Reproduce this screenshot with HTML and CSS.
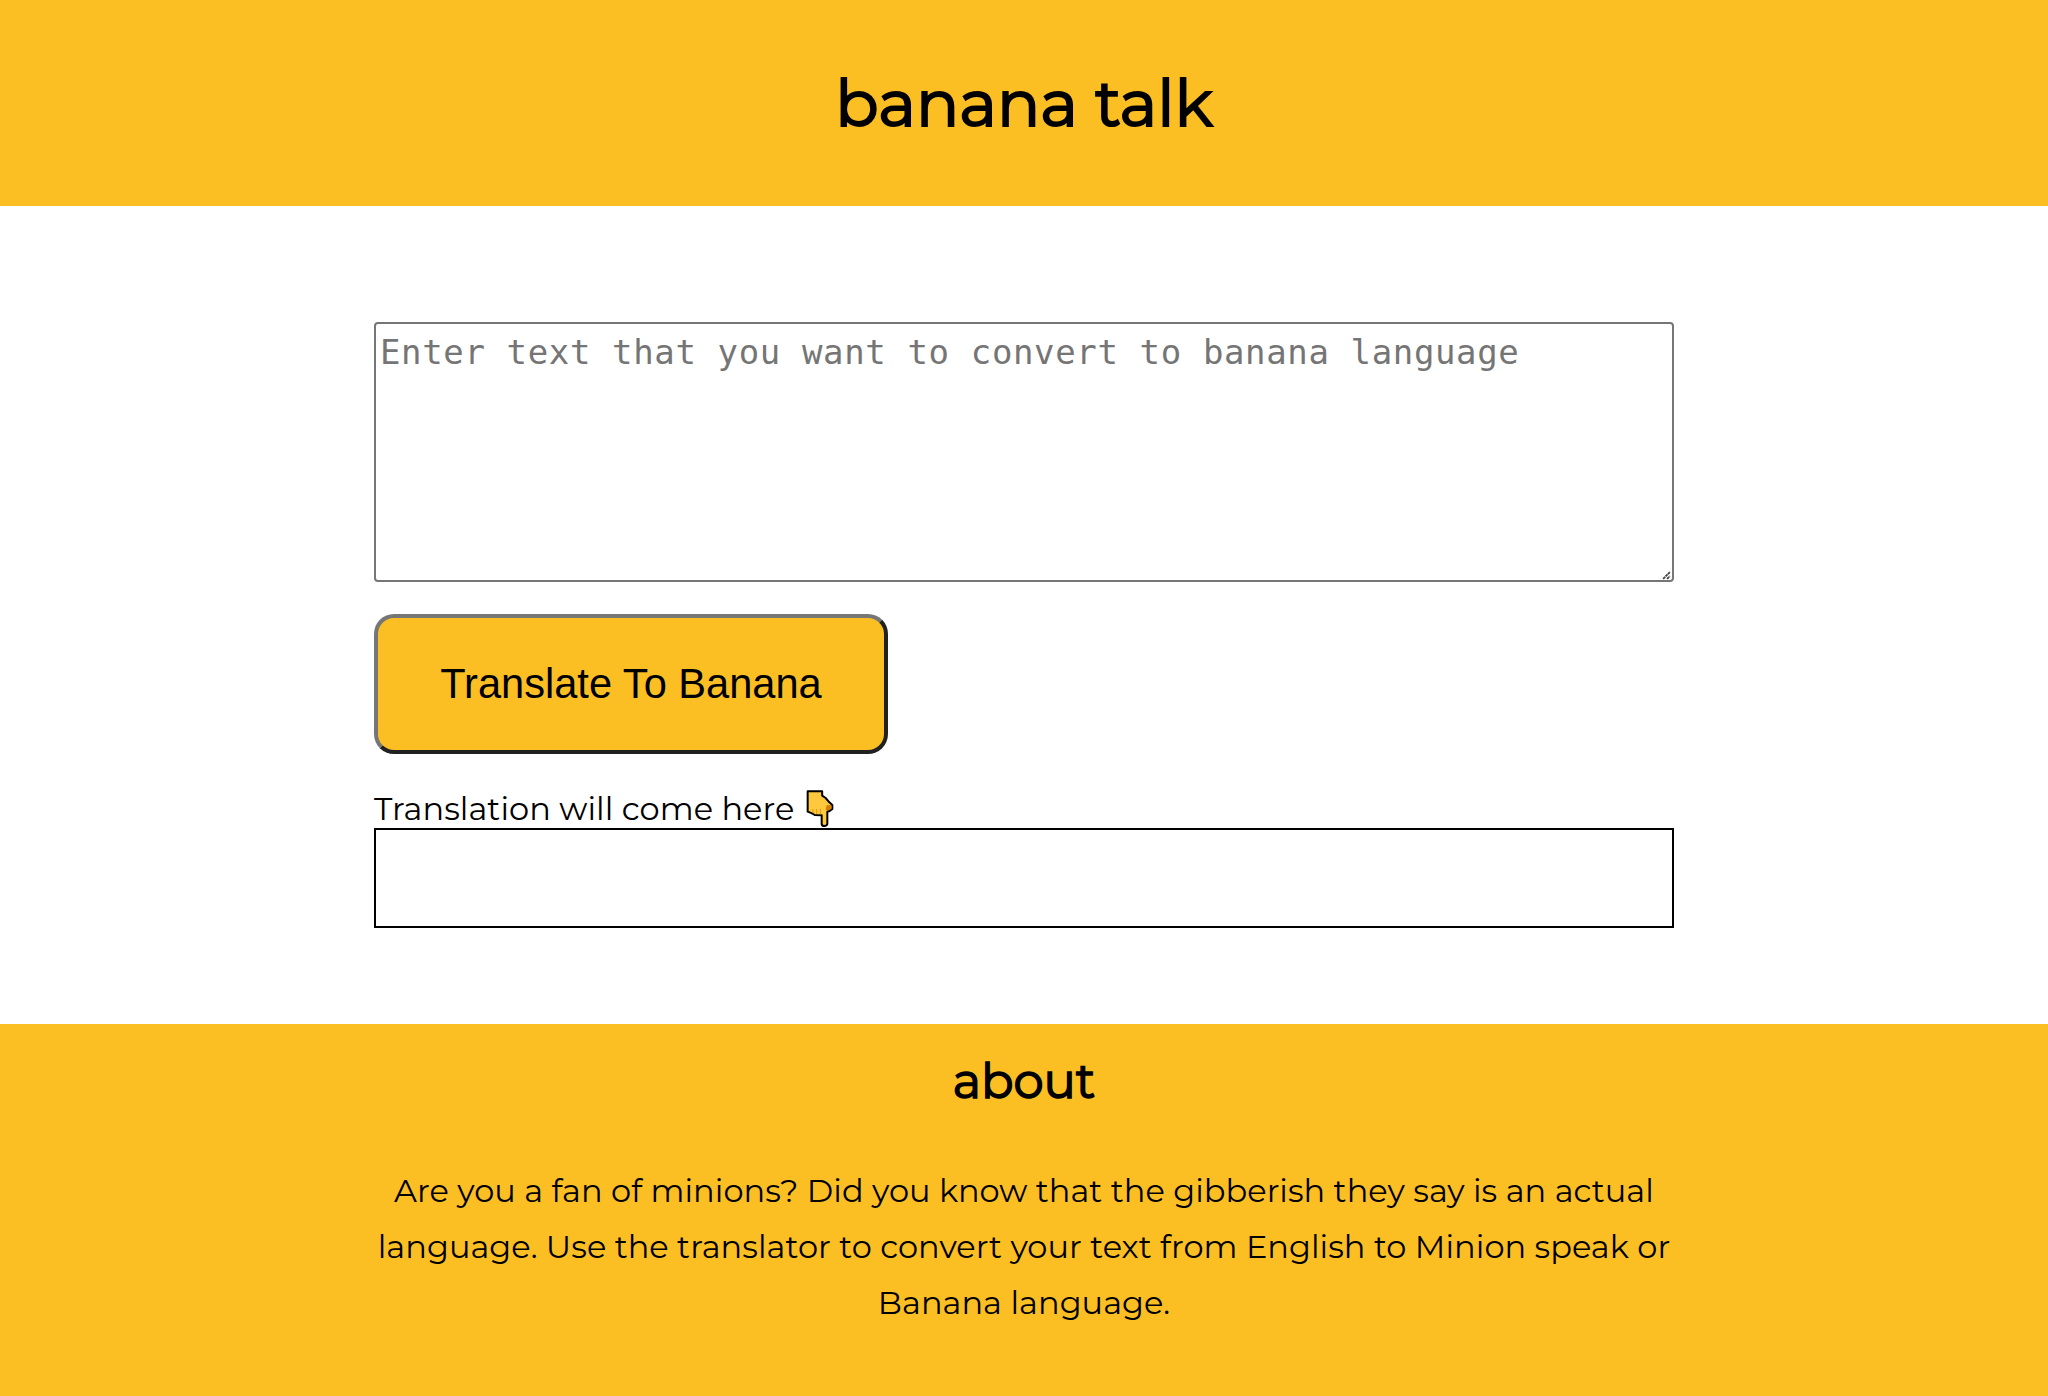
FILE: index.html
```html
<!DOCTYPE html>
<html lang="en">
<head>
<meta charset="utf-8">
<title>banana talk</title>
<link rel="stylesheet" href="styles.css">
</head>
<body>
<header class="header"><h1 class="title">banana talk</h1></header>
<main class="main">
  <div class="input-wrap">
    <textarea class="input" placeholder="Enter text that you want to convert to banana language"></textarea>
    <svg class="grip" viewBox="0 0 8 8"><path d="M1 7L7 1M4.500 7L7 4.500" fill="none" stroke="#444" stroke-width="1.6" stroke-dasharray="2.600 .4"/></svg>
  </div>
  <button class="translate">Translate To Banana</button>
  <div class="label"><span class="label-text">Translation will come here</span>
    <svg class="hand" viewBox="78 60 84 111"><path d="M83 63.500H126.500V77L137 84L148 97L157 105V117L149 123L142 125V162Q140 168 133 168Q126 168 125 162V136L104 135L96 130L83 125Z" fill="#ffc83d" stroke="#000" stroke-width="6" stroke-linejoin="round"/><path d="M140 105L152 106L155 110V115L148 120L137 121Z" fill="#d67d00"/><path d="M99 117V129M110 117V132M121 117V133" stroke="#d99a16" stroke-width="3"/></svg>
  </div>
  <div class="output"></div>
</main>
<footer class="footer">
  <h2 class="about">about</h2>
  <p class="copy">Are you a fan of minions? Did you know that the gibberish they say is an actual language. Use the translator to convert your text from English to Minion speak or Banana language.</p>
</footer>
</body>
</html>
```
FILE: styles.css
```css
* { box-sizing: border-box; }
body {
  margin: 0;
  min-height: 1396px;
  display: flex;
  flex-direction: column;
  font-family: Montserrat, Inter, sans-serif;
  font-size: 32px;
  font-weight: 400;
  color: #000;
  background: #fff;
}
.header {
  height: 206px;
  padding-top: 64px;
  background: #fbbf24;
  text-align: center;
}
.title {
  margin: 0;
  font-size: 64px;
  line-height: 78px;
  font-weight: 400;
  -webkit-text-stroke: 2px #000;
}
.main {
  width: 1300px;
  height: 818px;
  margin: 0 auto;
  padding-top: 116px;
}
.input-wrap {
  position: relative;
  height: 260px;
}
.input {
  display: block;
  width: 100%;
  height: 100%;
  margin: 0;
  padding: 8px 4px;
  border: 2px solid #767676;
  border-radius: 4px;
  resize: none;
  background: #fff;
  font-family: Consolas, "DejaVu Sans Mono", monospace;
  font-size: 34px;
  line-height: 40px;
  letter-spacing: 0.63px;
}
.input::placeholder { color: #757575; }
.grip {
  position: absolute;
  right: 3px;
  bottom: 2px;
  width: 9px;
  height: 9px;
}
.translate {
  display: block;
  width: 514px;
  height: 140px;
  margin: 32px 0 0;
  padding: 0;
  border: 4px solid;
  border-color: #767676 #212121 #212121 #767676;
  border-radius: 20px;
  background: #fbbf24;
  color: #000;
  font-family: "Liberation Sans", Arial, sans-serif;
  font-size: 41.6px;
}
.label {
  display: flex;
  align-items: flex-start;
  height: 74px;
  padding-top: 35px;
}
.label-text {
  width: 432px;
  line-height: 40px;
  white-space: nowrap;
  letter-spacing: 0.04px;
}
.hand {
  width: 28px;
  height: 37px;
  margin-top: 1px;
}
.output {
  height: 100px;
  border: 2px solid #000;
}
.footer {
  flex: 1;
  padding-top: 27px;
  background: #fbbf24;
  text-align: center;
}
.about {
  margin: 0;
  font-size: 48px;
  line-height: 60px;
  font-weight: 400;
  -webkit-text-stroke: 1.5px #000;
}
.copy {
  width: 1300px;
  margin: 52px auto 0;
  line-height: 56px;
  letter-spacing: 0.03px;
}
```
